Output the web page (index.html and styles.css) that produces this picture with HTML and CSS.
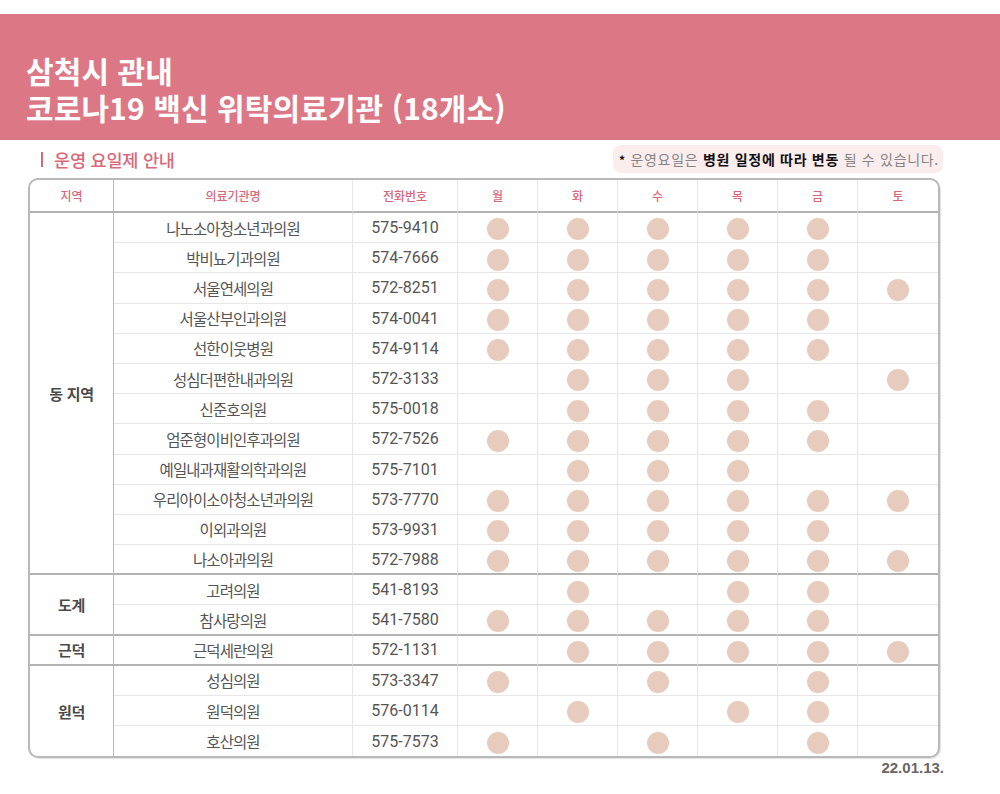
FILE: index.html
```html
<!DOCTYPE html>
<html lang="ko">
<head>
<meta charset="utf-8">
<title>삼척시 관내 코로나19 백신 위탁의료기관</title>
<link rel="stylesheet" href="styles.css">
</head>
<body>
<header class="band">
  <h1 class="title"><span class="tline">삼척시 관내</span><span class="tline">코로나19 백신 위탁의료기관 (18개소)</span></h1>
</header>
<div class="subrow">
  <div class="subtitle"><span class="bar"></span>운영 요일제 안내</div>
  <div class="notice"><b class="star">*</b> 운영요일은 <b>병원 일정에 따라 변동</b> 될 수 있습니다.</div>
</div>
<div class="tablewrap">
  <table class="sched">
    <colgroup>
      <col class="c-region"><col class="c-name"><col class="c-tel">
      <col class="c-day"><col class="c-day"><col class="c-day"><col class="c-day"><col class="c-day"><col class="c-day">
    </colgroup>
    <thead>
      <tr><th class="region">지역</th><th>의료기관명</th><th>전화번호</th><th>월</th><th>화</th><th>수</th><th>목</th><th>금</th><th class="last">토</th></tr>
    </thead>
    <tbody>
      <tr><td class="region grp" rowspan="12">동 지역</td><td class="name">나노소아청소년과의원</td><td class="tel">575-9410</td><td><i class="dot"></i></td><td><i class="dot"></i></td><td><i class="dot"></i></td><td><i class="dot"></i></td><td><i class="dot"></i></td><td class="last"></td></tr>
      <tr><td class="name">박비뇨기과의원</td><td class="tel">574-7666</td><td><i class="dot"></i></td><td><i class="dot"></i></td><td><i class="dot"></i></td><td><i class="dot"></i></td><td><i class="dot"></i></td><td class="last"></td></tr>
      <tr><td class="name">서울연세의원</td><td class="tel">572-8251</td><td><i class="dot"></i></td><td><i class="dot"></i></td><td><i class="dot"></i></td><td><i class="dot"></i></td><td><i class="dot"></i></td><td class="last"><i class="dot"></i></td></tr>
      <tr><td class="name">서울산부인과의원</td><td class="tel">574-0041</td><td><i class="dot"></i></td><td><i class="dot"></i></td><td><i class="dot"></i></td><td><i class="dot"></i></td><td><i class="dot"></i></td><td class="last"></td></tr>
      <tr><td class="name">선한이웃병원</td><td class="tel">574-9114</td><td><i class="dot"></i></td><td><i class="dot"></i></td><td><i class="dot"></i></td><td><i class="dot"></i></td><td><i class="dot"></i></td><td class="last"></td></tr>
      <tr><td class="name">성심더편한내과의원</td><td class="tel">572-3133</td><td></td><td><i class="dot"></i></td><td><i class="dot"></i></td><td><i class="dot"></i></td><td></td><td class="last"><i class="dot"></i></td></tr>
      <tr><td class="name">신준호의원</td><td class="tel">575-0018</td><td></td><td><i class="dot"></i></td><td><i class="dot"></i></td><td><i class="dot"></i></td><td><i class="dot"></i></td><td class="last"></td></tr>
      <tr><td class="name">엄준형이비인후과의원</td><td class="tel">572-7526</td><td><i class="dot"></i></td><td><i class="dot"></i></td><td><i class="dot"></i></td><td><i class="dot"></i></td><td><i class="dot"></i></td><td class="last"></td></tr>
      <tr><td class="name">예일내과재활의학과의원</td><td class="tel">575-7101</td><td></td><td><i class="dot"></i></td><td><i class="dot"></i></td><td><i class="dot"></i></td><td></td><td class="last"></td></tr>
      <tr><td class="name">우리아이소아청소년과의원</td><td class="tel">573-7770</td><td><i class="dot"></i></td><td><i class="dot"></i></td><td><i class="dot"></i></td><td><i class="dot"></i></td><td><i class="dot"></i></td><td class="last"><i class="dot"></i></td></tr>
      <tr><td class="name">이외과의원</td><td class="tel">573-9931</td><td><i class="dot"></i></td><td><i class="dot"></i></td><td><i class="dot"></i></td><td><i class="dot"></i></td><td><i class="dot"></i></td><td class="last"></td></tr>
      <tr class="grp"><td class="name">나소아과의원</td><td class="tel">572-7988</td><td><i class="dot"></i></td><td><i class="dot"></i></td><td><i class="dot"></i></td><td><i class="dot"></i></td><td><i class="dot"></i></td><td class="last"><i class="dot"></i></td></tr>

      <tr><td class="region grp" rowspan="2">도계</td><td class="name">고려의원</td><td class="tel">541-8193</td><td></td><td><i class="dot"></i></td><td></td><td><i class="dot"></i></td><td><i class="dot"></i></td><td class="last"></td></tr>
      <tr class="grp"><td class="name">참사랑의원</td><td class="tel">541-7580</td><td><i class="dot"></i></td><td><i class="dot"></i></td><td><i class="dot"></i></td><td><i class="dot"></i></td><td><i class="dot"></i></td><td class="last"></td></tr>

      <tr class="grp"><td class="region grp">근덕</td><td class="name">근덕세란의원</td><td class="tel">572-1131</td><td></td><td><i class="dot"></i></td><td><i class="dot"></i></td><td><i class="dot"></i></td><td><i class="dot"></i></td><td class="last"><i class="dot"></i></td></tr>

      <tr><td class="region end" rowspan="3">원덕</td><td class="name">성심의원</td><td class="tel">573-3347</td><td><i class="dot"></i></td><td></td><td><i class="dot"></i></td><td></td><td><i class="dot"></i></td><td class="last"></td></tr>
      <tr><td class="name">원덕의원</td><td class="tel">576-0114</td><td></td><td><i class="dot"></i></td><td></td><td><i class="dot"></i></td><td><i class="dot"></i></td><td class="last"></td></tr>
      <tr class="end"><td class="name">호산의원</td><td class="tel">575-7573</td><td><i class="dot"></i></td><td></td><td><i class="dot"></i></td><td></td><td><i class="dot"></i></td><td class="last"></td></tr>
    </tbody>
  </table>
</div>
<div class="date">22.01.13.</div>
</body>
</html>
```

FILE: styles.css
```css
* { box-sizing: border-box; }
html, body { margin: 0; padding: 0; background: #ffffff; }
body {
  font-family: "Noto Sans CJK KR", "Noto Sans", sans-serif;
  color: #555;
  width: 1000px;
  padding-top: 14px;
}
.band {
  background: #dc7886;
  height: 126px;
  padding: 38px 0 0 26px;
}
.title {
  margin: 0;
  color: #fff;
  font-size: 30px;
  font-weight: 700;
  line-height: 37px;
  letter-spacing: 0.1px;
}
.tline { display: block; }
.subrow {
  display: flex;
  justify-content: space-between;
  align-items: center;
  height: 28px;
  margin-top: 5px;
  padding: 0 57px 0 41px;
}
.subtitle {
  display: flex;
  align-items: center;
  gap: 11px;
  color: #d9687a;
  font-size: 17.5px;
  font-weight: 500;
  letter-spacing: -0.2px;
}
.bar {
  display: inline-block;
  width: 2px;
  height: 15px;
  background: #d9687a;
}
.notice {
  width: 330px;
  height: 28px;
  background: #fbecee;
  border-radius: 8px;
  font-size: 14px;
  line-height: 28px;
  color: #858585;
  padding-left: 6px;
  letter-spacing: 0.7px;
  white-space: nowrap;
}
.notice b { color: #111; font-weight: 700; }
.notice .star { font-size: 12px; }
.tablewrap {
  margin: 5px 0 0 28px;
  width: 912px;
  border: 2px solid #b9b9b9;
  border-radius: 10px;
  overflow: hidden;
  box-shadow: 1px 1px 1px rgba(0,0,0,0.12);
}
.sched {
  width: 100%;
  border-collapse: separate;
  border-spacing: 0;
  table-layout: fixed;
}
.c-region { width: 84px; }
.c-name { width: 239px; }
.c-tel { width: 105px; }
.c-day { width: 80px; }
.sched th {
  height: 33px;
  padding: 0;
  font-size: 12px;
  font-weight: 500;
  color: #d9687a;
  border-right: 1px solid #e6e6e6;
  border-bottom: 2px solid #b3b3b3;
  text-align: center;
}
.sched th.region { border-right: 1px solid #b9b9b9; }
.sched td {
  height: 30.2px;
  padding: 0;
  text-align: center;
  vertical-align: middle;
  border-right: 1px solid #e6e6e6;
  border-bottom: 1px solid #e6e6e6;
}
.sched .last { border-right: none; }
.sched td.region {
  font-size: 15px;
  font-weight: 700;
  color: #4a4a4a;
  border-right: 1px solid #b9b9b9;
  letter-spacing: -0.3px;
}
.sched tr.grp td, .sched td.region.grp { border-bottom: 2px solid #b3b3b3; }
.sched tr.end td, .sched td.region.end { border-bottom: none; }
.sched td.name {
  font-size: 15.5px;
  letter-spacing: -0.9px;
  color: #555;
}
.sched td.tel {
  font-family: Roboto, "Noto Sans", sans-serif;
  font-size: 16px;
  color: #555;
}
.dot {
  display: inline-block;
  width: 22px;
  height: 22px;
  border-radius: 50%;
  background: #e7cbbd;
  vertical-align: middle;
}
.date {
  width: 944px;
  text-align: right;
  font-family: "Liberation Sans", Arial, sans-serif;
  font-weight: 700;
  font-size: 15px;
  line-height: 17px;
  color: #666;
  margin-top: 1px;
}
```
